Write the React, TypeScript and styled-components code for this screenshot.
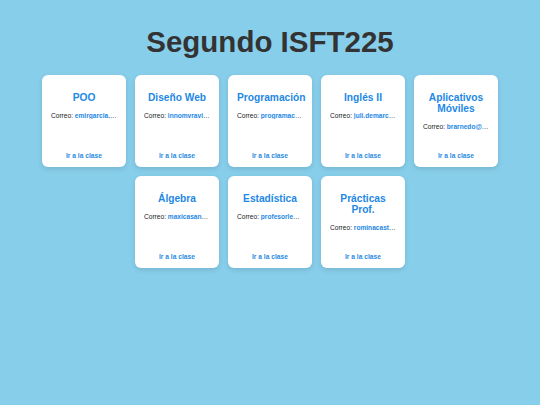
import React from "react"
import styled, { createGlobalStyle } from "styled-components"

type Course = {
  name: string
  email: string
}

const courses: Course[] = [
  { name: "POO", email: "emirgarcia.profe@gmail.com" },
  { name: "Diseño Web", email: "innomvravillalba@gmail.com" },
  { name: "Programación", email: "programacion225@gmail.com" },
  { name: "Inglés II", email: "juli.demarco@gmail.com" },
  { name: "Aplicativos Móviles", email: "brarnedo@gmail.com" },
  { name: "Álgebra", email: "maxicasanova@gmail.com" },
  { name: "Estadística", email: "profesorleandro@gmail.com" },
  { name: "Prácticas Prof.", email: "rominacastro@gmail.com" }
]

const GlobalStyle = createGlobalStyle`
  html, body {
    margin: 0;
    padding: 0;
    background: #87ceeb;
    font-family: "Liberation Sans", Arial, Helvetica, sans-serif;
  }
`

const Page = styled.div`
  min-height: 405px;
  padding-top: 25px;
  box-sizing: border-box;
`

const Heading = styled.h1`
  margin: 0 0 16px;
  text-align: center;
  font-size: 29.5px;
  font-weight: bold;
  color: #333;
`

const Grid = styled.div`
  max-width: 470px;
  margin: 0 auto;
  display: flex;
  flex-wrap: wrap;
  justify-content: center;
  gap: 9px;
`

const Card = styled.div`
  width: 84px;
  height: 92px;
  box-sizing: border-box;
  padding: 8px 9px;
  background: #fff;
  border-radius: 6px;
  box-shadow: 0 2px 5px rgba(0, 0, 0, 0.12);
  display: flex;
  flex-direction: column;
  text-align: center;
`

const Title = styled.h3`
  margin: 9px 0 9px;
  font-size: 10.2px;
  font-weight: bold;
  color: #1e88e5;
`

const Mail = styled.p`
  margin: 0;
  font-size: 6.6px;
  color: #222;
  white-space: nowrap;
  overflow: hidden;
  text-overflow: ellipsis;

  strong {
    color: #1e88e5;
  }
`

const ClassLink = styled.a`
  margin-top: auto;
  font-size: 6.7px;
  font-weight: bold;
  color: #2a8be2;
  text-decoration: none;
`

export default function App() {
  return (
    <Page>
      <GlobalStyle />
      <Heading>Segundo ISFT225</Heading>
      <Grid>
        {courses.map((c) => (
          <Card key={c.name}>
            <Title>{c.name}</Title>
            <Mail>
              Correo: <strong>{c.email}</strong>
            </Mail>
            <ClassLink href="#">Ir a la clase</ClassLink>
          </Card>
        ))}
      </Grid>
    </Page>
  )
}
